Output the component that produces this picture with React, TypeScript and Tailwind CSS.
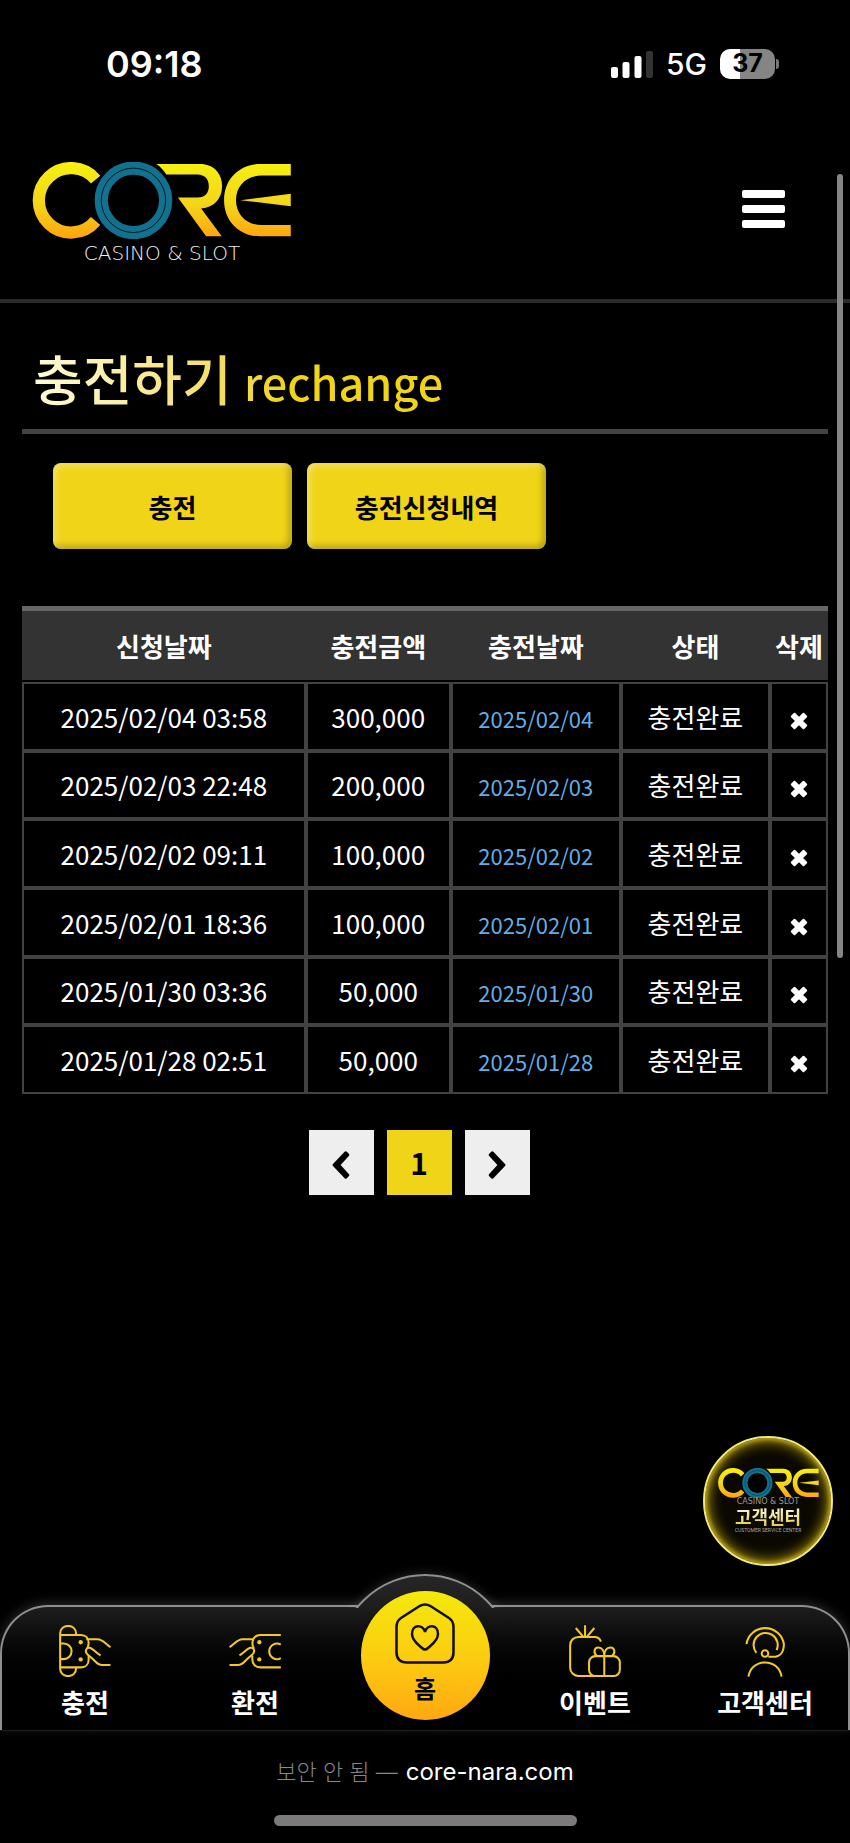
import { useId } from "react";
import type { ReactNode } from "react";

interface RechargeRow {
	requestedAt: string;
	amount: string;
	chargedOn: string;
	status: string;
}

const ROWS: readonly RechargeRow[] = [
	{ requestedAt: "2025/02/04 03:58", amount: "300,000", chargedOn: "2025/02/04", status: "충전완료" },
	{ requestedAt: "2025/02/03 22:48", amount: "200,000", chargedOn: "2025/02/03", status: "충전완료" },
	{ requestedAt: "2025/02/02 09:11", amount: "100,000", chargedOn: "2025/02/02", status: "충전완료" },
	{ requestedAt: "2025/02/01 18:36", amount: "100,000", chargedOn: "2025/02/01", status: "충전완료" },
	{ requestedAt: "2025/01/30 03:36", amount: "50,000", chargedOn: "2025/01/30", status: "충전완료" },
	{ requestedAt: "2025/01/28 02:51", amount: "50,000", chargedOn: "2025/01/28", status: "충전완료" },
];

const COLUMNS = [
	{ label: "신청날짜", width: "w-[35.2%]" },
	{ label: "충전금액", width: "w-[18%]" },
	{ label: "충전날짜", width: "w-[21.1%]" },
	{ label: "상태", width: "w-[18.5%]" },
	{ label: "삭제", width: "w-[7.2%]" },
];

const CELL = "border-2 border-[#424242] p-0 text-center whitespace-nowrap";

function CoreMark({ className }: Readonly<{ className?: string }>) {
	const id = useId();
	const fill = `url(#${id})`;
	return (
		<svg viewBox="0 0 780 232" className={className} aria-hidden="true">
			<defs>
				<linearGradient id={id} gradientUnits="userSpaceOnUse" x1="0" y1="0" x2="0" y2="232">
					<stop offset="0" stopColor="#f6f00f" />
					<stop offset="0.55" stopColor="#f3d51a" />
					<stop offset="1" stopColor="#ffa30f" />
				</linearGradient>
			</defs>
			<path d="M190 53A97 97 0 1 0 190 178" fill="none" stroke={fill} strokeWidth="37" />
			<circle cx="304" cy="115.5" r="124" fill="#000" />
			<path
				fill={fill}
				d="M373 6H505C545 6 571 34 571 72C571 110 548 136 508 140L570 224H523L438 107H497C520 107 531 93 531 73C531 53 520 38 497 38H403C396 26 386 15 373 6Z"
			/>
			<path
				fill={fill}
				d="M778 6H686C625 6 577 50 577 115S625 224 686 224H778V190H690C645 190 613 158 613 115S645 41 690 41H778ZM626 115L778 96V133Z"
			/>
			<circle cx="304" cy="115.5" r="97" fill="none" stroke="#11718f" strokeWidth="40" />
			<circle cx="304" cy="115.5" r="97" fill="none" stroke="#031a22" strokeWidth="3" />
		</svg>
	);
}

function StatusBar() {
	return (
		<div className="flex h-32 items-center justify-between pr-[71px] pl-[106px] font-['Inter',sans-serif]">
			<span className="text-[36px] font-semibold">09:18</span>
			<div className="flex items-center gap-[13px]">
				<svg viewBox="0 0 42 27" className="h-[27px] w-[42px]" fill="#fff" aria-hidden="true">
					<rect x="0" y="16" width="7" height="11" rx="2" />
					<rect x="11.5" y="11" width="7" height="16" rx="2" />
					<rect x="23.5" y="5" width="7" height="22" rx="2" />
					<rect x="35" y="0" width="7" height="27" rx="2" fill="#333" />
				</svg>
				<span className="text-[30px] leading-8 font-medium">5G</span>
				<div className="flex items-center gap-px">
					<span className="flex h-[30px] w-[55px] items-center justify-center rounded-[10px] bg-linear-to-r from-white from-37% to-[#858585] to-37% text-[25px] font-bold text-black">
						37
					</span>
					<span className="h-[10px] w-[3px] rounded-r-full bg-[#777]" />
				</div>
			</div>
		</div>
	);
}

function SiteHeader() {
	return (
		<header className="flex items-start justify-between border-b-4 border-[#2b2a2b] pt-[34px] pr-[65px] pb-9 pl-8">
			<a href="#home" className="flex flex-col items-center" aria-label="CORE CASINO & SLOT">
				<CoreMark className="h-[77px] w-[260px]" />
				<span className="mt-1 font-['DejaVu_Sans',sans-serif] text-[20px] leading-5 font-extralight text-[#eee]">
					CASINO &amp; SLOT
				</span>
			</a>
			<button type="button" aria-label="메뉴" className="mt-7 flex flex-col gap-[7px]">
				<span className="h-2 w-[43px] rounded-xs bg-white" />
				<span className="h-2 w-[43px] rounded-xs bg-white" />
				<span className="h-2 w-[43px] rounded-xs bg-white" />
			</button>
		</header>
	);
}

function TabButton({ children }: Readonly<{ children: ReactNode }>) {
	return (
		<button
			type="button"
			className="h-[86px] w-[239px] rounded-lg bg-[#f0d418] text-[26px] font-bold text-black shadow-[inset_3px_3px_6px_rgba(255,255,255,0.35),inset_-3px_-3px_6px_rgba(0,0,0,0.25)]"
		>
			{children}
		</button>
	);
}

function RechargeTable() {
	return (
		<table className="mt-[57px] h-[488px] w-full table-fixed border-separate border-spacing-0 text-[26px]">
			<thead>
				<tr>
					{COLUMNS.map((col) => (
						<th
							key={col.label}
							scope="col"
							className={`${col.width} h-[76px] border-t-[5px] border-b-2 border-t-[#666] border-b-black bg-[#343334] p-0 font-bold whitespace-nowrap`}
						>
							{col.label}
						</th>
					))}
				</tr>
			</thead>
			<tbody>
				{ROWS.map((row) => (
					<tr key={row.requestedAt}>
						<td className={CELL}>{row.requestedAt}</td>
						<td className={CELL}>{row.amount}</td>
						<td className={CELL}>
							<span className="text-[22px] text-[#63aee6]">{row.chargedOn}</span>
						</td>
						<td className={CELL}>{row.status}</td>
						<td className={CELL}>
							<button type="button" aria-label={`${row.requestedAt} 삭제`} className="align-middle">
								<svg viewBox="0 0 18 18" className="size-[18px]" aria-hidden="true">
									<path
										d="M4.500 1.800L9 6.300L13.500 1.800L16.200 4.500L11.700 9L16.200 13.500L13.500 16.200L9 11.700L4.500 16.200L1.800 13.500L6.300 9L1.800 4.500Z"
										fill="#fff"
										stroke="#fff"
										strokeWidth="2"
										strokeLinejoin="round"
									/>
								</svg>
							</button>
						</td>
					</tr>
				))}
			</tbody>
		</table>
	);
}

function Pagination() {
	return (
		<nav aria-label="페이지" className="mt-9 flex justify-center gap-[13px] pr-3 text-black">
			<button type="button" aria-label="이전" className="flex size-[65px] items-center justify-center bg-[#eee]">
				<svg viewBox="0 0 18 28" className="mt-1 h-7 w-[18px]" fill="#000" aria-hidden="true">
					<path d="M12.6.8 1 12.9a1.6 1.6 0 0 0 0 2.2l11.6 12.1a1.6 1.6 0 0 0 2.2 0l2-2a1.6 1.6 0 0 0 0-2.2L8.600 14l8.200-9a1.600 1.600 0 0 0 0-2.200l-2-2a1.600 1.600 0 0 0-2.200 0z" />
				</svg>
			</button>
			<a
				href="#page-1"
				aria-current="page"
				className="flex size-[65px] items-center justify-center bg-[#f0d418] text-[30px] font-bold"
			>
				1
			</a>
			<button type="button" aria-label="다음" className="flex size-[65px] items-center justify-center bg-[#eee]">
				<svg viewBox="0 0 18 28" className="mt-1 h-7 w-[18px] -scale-x-100" fill="#000" aria-hidden="true">
					<path d="M12.6.8 1 12.9a1.6 1.6 0 0 0 0 2.2l11.6 12.1a1.6 1.6 0 0 0 2.2 0l2-2a1.6 1.6 0 0 0 0-2.2L8.600 14l8.200-9a1.600 1.600 0 0 0 0-2.200l-2-2a1.600 1.600 0 0 0-2.200 0z" />
				</svg>
			</button>
		</nav>
	);
}

function SupportBadge() {
	return (
		<a
			href="#support"
			aria-label="고객센터"
			className="absolute right-[17px] bottom-[277px] flex size-[130px] flex-col items-center rounded-full border-2 border-[#f3ea7c] bg-[#0a0800] pt-[30px] shadow-[inset_0_0_14px_3px_#b39a10,inset_0_0_4px_1px_#e8d52c]"
		>
			<CoreMark className="h-[30px] w-[101px]" />
			<span className="font-['DejaVu_Sans',sans-serif] text-[8px] leading-2 text-[#999]">CASINO &amp; SLOT</span>
			<span className="bg-linear-to-b from-[#fffbe0] to-[#e5cf30] bg-clip-text text-[18px] leading-5 font-bold text-transparent">
				고객센터
			</span>
			<span className="font-['Roboto',sans-serif] text-[5px] leading-2 text-[#aaa]">CUSTOMER SERVICE CENTER</span>
		</a>
	);
}

function LineIcon({ children }: Readonly<{ children: ReactNode }>) {
	return (
		<svg
			viewBox="0 0 156 157"
			className="size-[52px]"
			fill="none"
			stroke="#f2c82a"
			strokeWidth="6.200"
			aria-hidden="true"
		>
			{children}
		</svg>
	);
}

function DepositIcon() {
	return (
		<LineIcon>
			<path d="M51 29V25A22 22 0 0 0 29 3H25A22 22 0 0 0 3 25V132A22 22 0 0 0 25 154H29A22 22 0 0 0 51 132V128" />
			<path d="M3 30H66C80 30 89 40 89 54C89 62 87 66 84 72M3 128H66C80 128 89 118 89 104V93" />
			<path d="M3 56H14A23.500 23.500 0 0 1 14 103H3" />
			<path d="M82 43H116C132 43 140 58 155 67M155 121H130C117 121 110 111 104 105L85 88C76 79 82 68 91 69C101 70 111 84 125 92" />
			<circle cx="65" cy="52" r="6.500" fill="#f2c82a" stroke="none" />
			<circle cx="65" cy="104" r="6.500" fill="#f2c82a" stroke="none" />
		</LineIcon>
	);
}

function WithdrawIcon() {
	return (
		<LineIcon>
			<path d="M156 30H94C80 30 70 40 70 54C70 62 72 66 75 72M156 128H94C80 128 70 118 70 104V93" />
			<path d="M156 59A23.500 23.500 0 1 0 156 100" />
			<path d="M74 43H40C24 43 16 58 1 67M1 121H26C39 121 46 111 52 105L71 88C80 79 74 68 65 69C55 70 45 84 31 92" />
			<circle cx="91" cy="52" r="6.500" fill="#f2c82a" stroke="none" />
			<circle cx="91" cy="104" r="6.500" fill="#f2c82a" stroke="none" />
		</LineIcon>
	);
}

function EventIcon() {
	return (
		<LineIcon>
			<path d="M48 34V1M42 35L20 9M54 35L76 9" />
			<path d="M96 50C93 41 86 36 76 36H28A25 25 0 0 0 3 61V129A25 25 0 0 0 28 154H84" />
			<rect x="60" y="94" width="93" height="60" rx="19" />
			<path d="M106 94V154M106 94C106 78 99 68 88 68C75 68 72 84 84 94M106 94C106 78 113 68 124 68C138 68 141 84 129 94" />
		</LineIcon>
	);
}

function SupportIcon() {
	return (
		<LineIcon>
			<path d="M22 58A57 56 0 0 1 135 58C135 82 123 96 103 96H88" />
			<path d="M52 84A36.500 36.500 0 1 1 113 76" />
			<circle cx="78" cy="86" r="10" />
			<path d="M28 156C32 130 52 113 78 113S124 130 128 156" />
		</LineIcon>
	);
}

function NavItem({ href, label, icon }: Readonly<{ href: string; label: string; icon: ReactNode }>) {
	return (
		<a href={href} className="flex flex-1 flex-col items-center gap-1 pt-[18px]">
			{icon}
			<span className="text-[26px] leading-[42px] font-bold">{label}</span>
		</a>
	);
}

function BottomNav() {
	return (
		<nav
			aria-label="하단 메뉴"
			className="relative h-[125px] rounded-t-[48px] border-2 border-b-0 border-[#8f8f8f] bg-linear-to-b from-[#1d1d1d] to-black to-75% shadow-[0_-2px_12px_rgba(255,255,255,0.16)]"
		>
			{/* raised arch behind the home button */}
			<div className="absolute bottom-[122px] left-1/2 h-[34px] w-[176px] -translate-x-1/2 [clip-path:inset(-16px_-16px_0)]">
				<div className="size-[176px] rounded-full border-2 border-[#8f8f8f] bg-linear-to-b from-[#262626] to-[#1d1d1d] to-20% shadow-[0_0_12px_rgba(255,255,255,0.16)]" />
			</div>
			<div className="-mx-0.5 flex">
				<NavItem href="#deposit" label="충전" icon={<DepositIcon />} />
				<NavItem href="#withdraw" label="환전" icon={<WithdrawIcon />} />
				<div className="relative flex flex-1 justify-center">
					<a
						href="#home"
						className="absolute -top-4 flex size-[129px] flex-col items-center rounded-full bg-linear-to-b from-[#f3e90c] via-[#fbcd10] to-[#ffa812] pt-3 text-black"
					>
						<svg
							viewBox="0 0 60 61"
							className="h-[61px] w-[60px]"
							fill="none"
							stroke="#110d00"
							strokeWidth="2.500"
							aria-hidden="true"
						>
							<path d="M25 2.800Q30 0 35 2.800L54 15Q58.500 18 58.500 24V49Q58.500 59.500 48 59.500H12Q1.500 59.500 1.500 49V24Q1.500 18 6 15Z" />
							<path d="M30 29C28 21 17 21 17 31C17 38 24 42 27 45Q30 48 33 45C36 42 43 38 43 31C43 21 32 21 30 29Z" />
						</svg>
						<span className="mt-2 text-[24px] leading-8 font-bold">홈</span>
					</a>
				</div>
				<NavItem href="#event" label="이벤트" icon={<EventIcon />} />
				<NavItem href="#support" label="고객센터" icon={<SupportIcon />} />
			</div>
		</nav>
	);
}

function BrowserBar() {
	return (
		<footer className="flex h-[113px] flex-col items-center border-t border-[#141414] pt-[25px]">
			<p className="flex items-center gap-2 font-['Inter','Noto_Sans_CJK_KR',sans-serif] leading-8">
				<span className="text-[22px] font-light text-[#888]">보안 안 됨 —</span>
				<span className="text-[24px]">core-nara.com</span>
			</p>
			<div className="mt-[27px] h-[11px] w-[303px] rounded-full bg-[#7d7a7c]" />
		</footer>
	);
}

export default function App() {
	return (
		<div className="relative flex min-h-screen flex-col bg-black font-['Noto_Sans_CJK_KR',sans-serif] text-white">
			<StatusBar />
			<SiteHeader />
			<main className="flex-1 px-[22px]">
				<h1 className="border-b-[5px] border-[#454345] pt-[39px] pb-[11px] pl-[11px] text-[54px] leading-[72px] font-medium">
					<span className="bg-linear-to-r from-[#fffbd6] to-[#f0d418] to-60% bg-clip-text text-transparent">
						충전하기 <span className="text-[45px]">rechange</span>
					</span>
				</h1>
				<div className="flex gap-[15px] pt-[29px] pl-[31px]">
					<TabButton>충전</TabButton>
					<TabButton>충전신청내역</TabButton>
				</div>
				<RechargeTable />
				<Pagination />
			</main>
			<BottomNav />
			<BrowserBar />
			<SupportBadge />
			{/* scroll thumb */}
			<div className="absolute top-[174px] right-[7px] h-[784px] w-[6px] rounded-full bg-[#868486]" />
		</div>
	);
}
